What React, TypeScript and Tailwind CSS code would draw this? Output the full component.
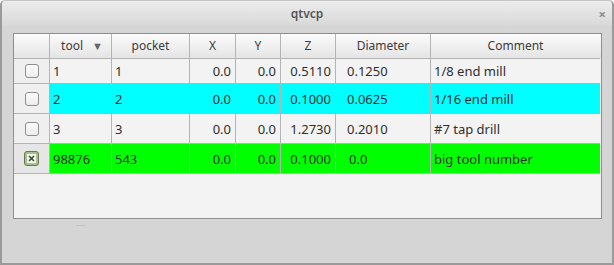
import React from 'react';

interface Tool {
  checked: boolean;
  tool: string;
  pocket: string;
  x: string;
  y: string;
  z: string;
  diameter: string;
  comment: string;
  bg: string;
  h: string;
}

const tools: Tool[] = [
  { checked: false, tool: '1', pocket: '1', x: '0.0', y: '0.0', z: '0.5110', diameter: '0.1250', comment: '1/8 end mill', bg: 'bg-[#f3f3f3]', h: 'h-[25px]' },
  { checked: false, tool: '2', pocket: '2', x: '0.0', y: '0.0', z: '0.1000', diameter: '0.0625', comment: '1/16 end mill', bg: 'bg-[#00ffff]', h: 'h-[30px]' },
  { checked: false, tool: '3', pocket: '3', x: '0.0', y: '0.0', z: '1.2730', diameter: '0.2010', comment: '#7 tap drill', bg: 'bg-[#f3f3f3]', h: 'h-[30px]' },
  { checked: true, tool: '98876', pocket: '543', x: '0.0', y: '0.0', z: '0.1000', diameter: '0.0', comment: 'big tool number', bg: 'bg-[#00ff00]', h: 'h-[30px]' },
];

const cell = 'border-r border-b border-[#b4b4b4] flex items-center';

function CheckBox({ checked }: { checked: boolean }) {
  if (checked) {
    return (
      <div className="w-[15px] h-[15px] rounded-[3px] border border-[#67785a] bg-[#a3c189] flex items-center justify-center">
        <svg width="9" height="9" viewBox="0 0 9 9">
          <rect x="0" y="0" width="9" height="9" fill="#f4f6f0" />
          <path d="M2 2 L7 7 M7 2 L2 7" stroke="#3c4a33" strokeWidth="1.6" />
        </svg>
      </div>
    );
  }
  return (
    <div className="w-[14px] h-[14px] rounded-[3px] border border-[#8e8e8e] bg-gradient-to-b from-[#fdfdfd] to-[#ececec]" />
  );
}

export default function App() {
  return (
    <div
      className="w-[614px] h-[265px] flex flex-col bg-[#d5d5d5] border-x-2 border-b-2 border-t border-[#9a9a9a] border-t-[#c4c4c4] rounded-t-[5px] overflow-hidden text-[#333]"
      style={{ fontFamily: '"Noto Sans", "Open Sans", sans-serif' }}
    >
      <div className="h-[25px] shrink-0 flex items-center bg-gradient-to-b from-[#ececec] to-[#d8d8d8] relative">
        <div className="flex-1 text-center text-[12px] text-[#555] font-semibold">qtvcp</div>
        <div className="absolute right-[6px] top-[4px] text-[13px] text-[#8a8a8a] font-bold">×</div>
      </div>

      <div className="ml-[11px] mt-[7px] w-[589px] h-[186px] border-l border-t border-[#8e8e8e] border-r border-b bg-[#f3f3f3] flex flex-col">
        <div className="flex h-[25px] bg-gradient-to-b from-[#fbfbfb] to-[#e4e4e4] text-[12px] text-[#3b3b3b]">
          <div className={`${cell} w-[36px]`} />
          <div className={`${cell} w-[62px]`}>
            <span className="flex-1 text-center pl-[2px]">tool</span>
            <span className="text-[11px] text-[#666] pr-[8px]">▼</span>
          </div>
          <div className={`${cell} w-[78px] justify-center`}>pocket</div>
          <div className={`${cell} w-[46px] justify-center`}>X</div>
          <div className={`${cell} w-[45px] justify-center`}>Y</div>
          <div className={`${cell} w-[55px] justify-center`}>Z</div>
          <div className={`${cell} w-[95px] justify-center`}>Diameter</div>
          <div className="border-b border-[#b4b4b4] flex items-center w-[169px] justify-center">Comment</div>
        </div>

        {tools.map((t) => (
          <div key={t.tool} className={`flex ${t.h} text-[13px] text-[#2e2e2e]`}>
            <div className={`${cell} w-[36px] justify-center ${t.checked ? 'bg-[#e6e6e6]' : 'bg-[#efefef]'}`}>
              <CheckBox checked={t.checked} />
            </div>
            <div className={`${cell} w-[62px] pl-[3px] pt-[2px] ${t.bg}`}>{t.tool}</div>
            <div className={`${cell} w-[78px] pl-[3px] pt-[2px] ${t.bg}`}>{t.pocket}</div>
            <div className={`${cell} w-[46px] justify-end pr-[4px] pt-[2px] ${t.bg}`}>{t.x}</div>
            <div className={`${cell} w-[45px] justify-end pr-[4px] pt-[2px] ${t.bg}`}>{t.y}</div>
            <div className={`${cell} w-[55px] justify-end pr-[4px] pt-[2px] ${t.bg}`}>{t.z}</div>
            <div className={`${cell} w-[95px] pt-[2px] ${t.checked ? 'pl-[13px]' : 'pl-[11px]'} ${t.bg}`}>{t.diameter}</div>
            <div className={`border-b border-[#b4b4b4] flex items-center w-[169px] pl-[3px] pt-[2px] ${t.bg}`}>{t.comment}</div>
          </div>
        ))}
      </div>

      <div className="ml-[74px] mt-[6px] w-[10px] h-px bg-[#b9d1aa]" />
    </div>
  );
}
